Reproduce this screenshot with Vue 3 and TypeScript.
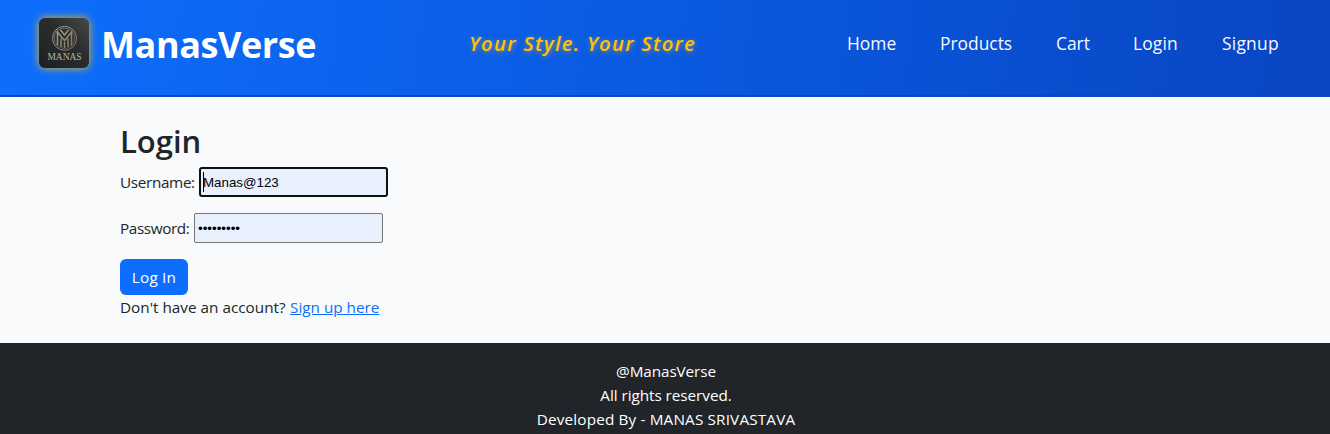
<script setup lang="ts">
import { ref } from 'vue'

interface NavItem { label: string; tone: string }

const nav: NavItem[] = [
  { label: 'Home', tone: 'home' },
  { label: 'Products', tone: 'products' },
  { label: 'Cart', tone: 'cart' },
  { label: 'Login', tone: 'login' },
  { label: 'Signup', tone: 'signup-link' },
]
const username = ref('Manas@123')
const password = ref('manas1234')
</script>

<template>
  <div class="page">
    <header class="header">
      <div class="brand">
        <svg class="logo" viewBox="0 0 50 50" role="img" aria-label="Manas">
          <defs>
            <linearGradient id="plate" x1="0" y1="1" x2="1" y2="0">
              <stop offset="0" stop-color="#1d2021" />
              <stop offset="0.6" stop-color="#2b2d2e" />
              <stop offset="1" stop-color="#46494a" />
            </linearGradient>
            <linearGradient id="metal" x1="0" y1="0" x2="1" y2="1">
              <stop offset="0" stop-color="#a89f8c" />
              <stop offset="1" stop-color="#7d7564" />
            </linearGradient>
          </defs>
          <rect width="50" height="50" fill="url(#plate)" />
          <g fill="none" stroke="url(#metal)">
            <circle cx="25.500" cy="20.300" r="12" stroke-width="1" />
            <circle cx="25.500" cy="20.300" r="10.200" stroke-width="0.6" />
            <path d="M18.500 27.500V14L25.500 22.500L32.500 14V27.500M22 29V20.500M29 29V20.500M25.500 30V24M21.500 12L25.500 17L29.500 12" stroke-width="1.5" />
            <path d="M9 20.500H12.500M38.500 20.500H42" stroke-width="0.6" />
          </g>
          <text x="25.500" y="41.700" class="logo-text" text-anchor="middle" textLength="34" lengthAdjust="spacingAndGlyphs">MANAS</text>
        </svg>
        <span class="brand-name">ManasVerse</span>
      </div>
      <div class="tagline">Your Style. Your Store</div>
      <nav class="nav">
        <a v-for="item in nav" :key="item.label" :class="['nav-link', item.tone]">{{ item.label }}</a>
      </nav>
    </header>

    <main class="content">
      <h2 class="title">Login</h2>
      <form @submit.prevent>
        <div class="field">
          <label class="label-user" for="username">Username:</label>
          <span class="control focused">
            <input id="username" v-model="username" type="text" autocomplete="off" spellcheck="false" />
            <i class="caret"></i>
          </span>
        </div>
        <div class="field">
          <label class="label-pass" for="password">Password:</label>
          <span class="control">
            <input id="password" v-model="password" type="password" autocomplete="off" />
          </span>
        </div>
        <button class="submit" type="submit">Log In</button>
      </form>
      <p class="signup"><span class="question">Don't have an account?</span><a class="link">Sign up here</a></p>
    </main>

    <footer class="footer">
      <div class="handle">@ManasVerse</div>
      <div class="rights">All rights reserved.</div>
      <div class="credit">Developed By - MANAS SRIVASTAVA</div>
    </footer>
  </div>
</template>

<style>
body { background: #f8fafc; overflow: hidden; }
</style>

<style scoped>
.page, .page * { box-sizing: border-box; }
.page {
  height: 434px;
  overflow: hidden;
  background: #f8fafc;
  color: #212529;
  font: 15.3px/24px "Open Sans", "Noto Sans", sans-serif;
  white-space: nowrap;
}
.header {
  height: 97px;
  display: grid;
  grid-template-columns: 430px 1fr auto;
  align-items: start;
  padding: 0 51px 0 39px;
  background: linear-gradient(97deg, #0d6efd, #0845c2);
  border-bottom: 2px solid #0648c2;
}
.brand { display: flex; align-items: flex-start; padding-top: 18px; }
.logo {
  width: 50px;
  height: 50px;
  border-radius: 6px;
  box-shadow: 0 0 8px rgba(255, 193, 7, 0.9);
}
.logo-text { font: 10.5px "Liberation Serif", serif; fill: #bdb4a2; }
.brand-name {
  margin: 1px 0 0 12px;
  color: #fff;
  font-size: 36px;
  font-weight: 700;
  line-height: 52px;
  letter-spacing: -0.4px;
}
.tagline {
  padding-top: 28px;
  color: #ffc107;
  font-size: 20.3px;
  font-style: italic;
  font-weight: 600;
  line-height: 30px;
  letter-spacing: 1.25px;
  text-shadow: 1px 1px 5px rgba(255, 193, 7, 0.5);
}
.nav { display: flex; gap: 44px; padding-top: 28px; }
.nav-link { color: #f8f9fa; font-size: 17.4px; line-height: 30px; }
.home { width: 49px; }
.products { width: 72px; }
.cart { width: 33px; }
.login { width: 45px; letter-spacing: 0.15px; }
.signup-link { width: 57px; letter-spacing: 0.25px; }
.content { height: 246px; padding: 25px 0 0 120px; }
.title { margin: 0 0 7px; font-size: 31px; font-weight: 600; line-height: 38px; }
form { display: flow-root; }
.field { display: flex; align-items: center; height: 30px; margin-bottom: 16px; }
.label-user { width: 79px; letter-spacing: -0.35px; }
.label-pass { width: 74px; letter-spacing: -0.4px; }
.control { position: relative; display: block; width: 189px; height: 30px; }
.control input {
  display: block;
  width: 189px;
  height: 30px;
  margin: 0;
  padding: 1px 2px 1px 3px;
  border: 1px solid #767676;
  border-radius: 2px;
  outline: 0;
  background: #e8f0fe;
  color: #000;
  font: 13.333px "Liberation Sans", Arial, sans-serif;
}
.focused input { border: 2px solid #101010; border-radius: 3px; padding-left: 2px; }
.caret { position: absolute; left: 4px; top: 5px; width: 1px; height: 20px; background: #000; }
.submit {
  display: block;
  width: 68px;
  height: 36px;
  padding: 0;
  border: 0;
  border-radius: 6px;
  background: #0d6efd;
  color: #fff;
  font: 15.3px/36px "Open Sans", "Noto Sans", sans-serif;
  letter-spacing: 0.2px;
}
.signup { display: flex; margin: 0; }
.question { width: 170px; }
.link { color: #0d6efd; text-decoration: underline; }
.footer { height: 91px; padding: 16px 0 0 2px; background: #212529; color: #fff; text-align: center; }
.handle { letter-spacing: -0.1px; }
.rights { letter-spacing: -0.05px; }
.credit { letter-spacing: 0.15px; }
</style>
